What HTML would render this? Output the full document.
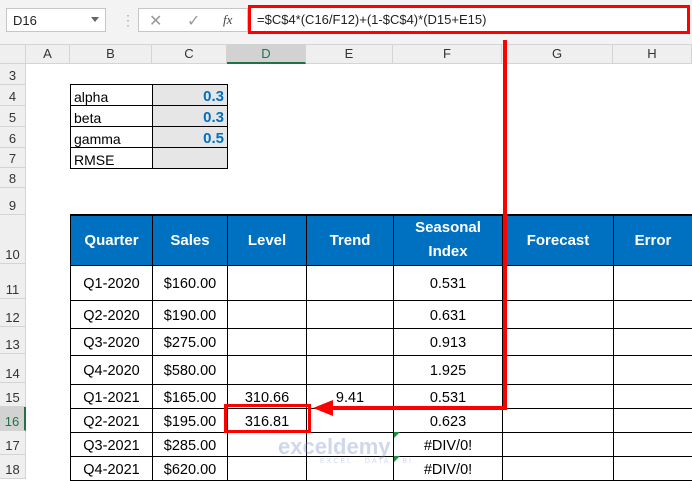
<!DOCTYPE html>
<html><head><style>
*{margin:0;padding:0;box-sizing:border-box}
body{width:692px;height:479px;overflow:hidden;background:#fff;font-family:"Liberation Sans",Calibri,sans-serif;position:relative}
.a{position:absolute}
.top{left:0;top:0;width:692px;height:45px;background:#f3f3f3;border-bottom:1px solid #d4d4d4}
.nb{left:6px;top:8px;width:100px;height:24px;background:#fff;border:1px solid #c6c6c6;font-size:13px;padding:4px 6px;color:#222}
.fx{left:138px;top:8px;width:110px;height:24px;background:#fff;border:1px solid #c6c6c6}
.fb{left:248px;top:5px;width:442px;height:29px;background:#fff;border:3px solid #f00;font-size:13px;padding:4px 6px;color:#222}
.ch{top:45px;height:19px;background:#efefef;border-right:1px solid #d4d4d4;border-bottom:1px solid #d4d4d4;font-size:13px;text-align:center;line-height:18px;color:#333}
.rh{left:0;width:26px;background:#efefef;border-bottom:1px solid #d4d4d4;border-right:1px solid #d4d4d4;font-size:13px;text-align:center;color:#333;display:flex;align-items:flex-end;justify-content:center;padding-bottom:1px}
table{position:absolute;border-collapse:collapse;font-size:14px;table-layout:fixed}
td{border:1px solid #000;padding:0 3px;white-space:nowrap;overflow:hidden}
.t1 td{height:21px;vertical-align:bottom}
.t2 td{text-align:center;vertical-align:middle;padding-top:3px;font-size:14.5px}
.t2 tr.h td{background:#0070c0;color:#fff;font-weight:bold;font-size:15px;vertical-align:middle;padding:0;border-top:2px solid #000}
</style></head><body>
<div class="a top"></div>
<div class="a nb">D16<span style="position:absolute;right:6px;top:8px;border:4px solid transparent;border-top:5px solid #666"></span></div>
<div class="a" style="left:121px;top:12px;color:#aaa;font-size:14px">⋮</div>
<div class="a fx"><span class="a" style="left:10px;top:2px;color:#999;font-size:16px">✕</span><span class="a" style="left:48px;top:2px;color:#999;font-size:16px">✓</span><span class="a" style="left:84px;top:3px;color:#444;font-size:13px;font-style:italic;font-family:'Liberation Serif',serif">fx</span></div>
<div class="a fb">=$C$4*(C16/F12)+(1-$C$4)*(D15+E15)</div>

<div class="a ch" style="left:0;width:26px"></div>
<div class="a ch" style="left:26px;width:44px">A</div>
<div class="a ch" style="left:70px;width:82px">B</div>
<div class="a ch" style="left:152px;width:75px">C</div>
<div class="a ch" style="left:227px;width:79px;background:#d2d2d2;color:#217346;border-bottom:2px solid #217346">D</div>
<div class="a ch" style="left:306px;width:87px">E</div>
<div class="a ch" style="left:393px;width:109px">F</div>
<div class="a ch" style="left:502px;width:111px">G</div>
<div class="a ch" style="left:613px;width:79px">H</div>

<div class="a rh" style="top:64px;height:21px">3</div>
<div class="a rh" style="top:85px;height:21px">4</div>
<div class="a rh" style="top:106px;height:21px">5</div>
<div class="a rh" style="top:127px;height:21px">6</div>
<div class="a rh" style="top:148px;height:20px">7</div>
<div class="a rh" style="top:168px;height:20px">8</div>
<div class="a rh" style="top:188px;height:27px">9</div>
<div class="a rh" style="top:215px;height:49px">10</div>
<div class="a rh" style="top:264px;height:35px">11</div>
<div class="a rh" style="top:299px;height:28px">12</div>
<div class="a rh" style="top:327px;height:27px">13</div>
<div class="a rh" style="top:354px;height:29px">14</div>
<div class="a rh" style="top:383px;height:24px">15</div>
<div class="a rh" style="top:407px;height:24px;background:#d2d2d2;color:#217346;border-right:2px solid #217346">16</div>
<div class="a rh" style="top:431px;height:24px">17</div>
<div class="a rh" style="top:455px;height:24px">18</div>

<table class="t1" style="left:70px;top:84px;width:157px">
<col style="width:82px"><col style="width:75px">
<tr><td>alpha</td><td style="background:#e7e6e6;text-align:right;color:#0070c0;font-weight:bold;font-size:15px">0.3</td></tr>
<tr><td>beta</td><td style="background:#e7e6e6;text-align:right;color:#0070c0;font-weight:bold;font-size:15px">0.3</td></tr>
<tr><td>gamma</td><td style="background:#e7e6e6;text-align:right;color:#0070c0;font-weight:bold;font-size:15px">0.5</td></tr>
<tr><td style="height:20px">RMSE</td><td style="background:#e7e6e6"></td></tr>
</table>

<table class="t2" style="left:70px;top:214px;width:622px">
<col style="width:82px"><col style="width:75px"><col style="width:79px"><col style="width:87px"><col style="width:109px"><col style="width:111px"><col style="width:79px">
<tr class="h" style="height:50px"><td>Quarter</td><td>Sales</td><td>Level</td><td>Trend</td><td style="line-height:24px">Seasonal<br>Index</td><td>Forecast</td><td>Error</td></tr>
<tr style="height:35px"><td>Q1-2020</td><td>$160.00</td><td></td><td></td><td>0.531</td><td></td><td></td></tr>
<tr style="height:28px"><td>Q2-2020</td><td>$190.00</td><td></td><td></td><td>0.631</td><td></td><td></td></tr>
<tr style="height:27px"><td>Q3-2020</td><td>$275.00</td><td></td><td></td><td>0.913</td><td></td><td></td></tr>
<tr style="height:29px"><td>Q4-2020</td><td>$580.00</td><td></td><td></td><td>1.925</td><td></td><td></td></tr>
<tr style="height:24px"><td>Q1-2021</td><td>$165.00</td><td>310.66</td><td>9.41</td><td>0.531</td><td></td><td></td></tr>
<tr style="height:24px"><td>Q2-2021</td><td>$195.00</td><td>316.81</td><td></td><td>0.623</td><td></td><td></td></tr>
<tr style="height:24px"><td>Q3-2021</td><td>$285.00</td><td></td><td></td><td>#DIV/0!</td><td></td><td></td></tr>
<tr style="height:24px"><td>Q4-2021</td><td>$620.00</td><td></td><td></td><td>#DIV/0!</td><td></td><td></td></tr>
</table>

<div class="a" style="left:394px;top:432px;border-top:6px solid #1e8c3a;border-right:6px solid transparent"></div>
<div class="a" style="left:394px;top:456px;border-top:6px solid #1e8c3a;border-right:6px solid transparent"></div>

<div class="a" style="left:224px;top:404px;width:87px;height:29px;border:3px solid #f00"></div>
<div class="a" style="left:503px;top:40px;width:4px;height:370px;background:#f00"></div>
<div class="a" style="left:330px;top:406px;width:177px;height:4px;background:#f00"></div>
<div class="a" style="left:313px;top:400px;border-right:20px solid #f00;border-top:8px solid transparent;border-bottom:8px solid transparent"></div>

<div class="a" style="left:278px;top:434px;font-size:22px;font-weight:bold;color:rgba(120,140,200,0.35)">exceldemy</div>
<div class="a" style="left:320px;top:458px;font-size:7px;letter-spacing:2px;color:rgba(120,140,200,0.35)">EXCEL · DATA · BI</div>
</body></html>
